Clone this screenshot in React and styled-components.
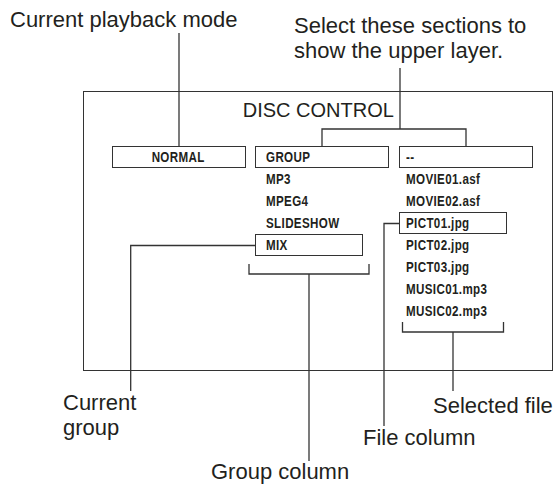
import React from 'react'
import styled, { createGlobalStyle } from 'styled-components'

const GlobalStyle = createGlobalStyle`
  html, body {
    margin: 0;
    padding: 0;
    background: #ffffff;
  }
  * {
    box-sizing: border-box;
  }
`

const INK = '#231f20'
const LINE = '#333333'

const Canvas = styled.div`
  position: relative;
  width: 554px;
  height: 484px;
  padding: 90.5px 0 0 82.5px;
  background: #ffffff;
  font-family: "Liberation Sans", Arial, Helvetica, sans-serif;
  color: ${INK};
  overflow: hidden;
`

const Callout = styled.div`
  position: absolute;
  top: ${p => p.$top}px;
  left: ${p => p.$left}px;
  font-size: 22px;
  line-height: 25px;
  white-space: nowrap;
`

const Leaders = styled.svg`
  position: absolute;
  top: 0;
  left: 0;
  pointer-events: none;
`

const Panel = styled.div`
  width: 470.5px;
  height: 280.5px;
  border: 1.5px solid ${LINE};
  padding: 8px 0 0 28px;
`

const Title = styled.div`
  font-size: 20px;
  line-height: 20px;
  text-align: center;
  margin-left: -28px;
  padding-left: 1px;
  height: 20px;
  margin-bottom: 26px;
`

const Columns = styled.div`
  display: grid;
  grid-template-columns: repeat(3, 134px);
  column-gap: 9.5px;
  align-items: start;
`

const Column = styled.div`
  display: flex;
  flex-direction: column;
`

const Item = styled.div`
  width: ${p => p.$width || 134}px;
  height: 22px;
  border: 1.5px solid ${p => (p.$boxed ? LINE : 'transparent')};
  padding: 2.5px ${p => p.$pad || 0}px 0;
  text-align: ${p => (p.$center ? 'center' : 'left')};
  font-weight: 700;
  font-size: 14.5px;
  line-height: 16px;
  white-space: nowrap;
`

// condensed bold face, the way the printed manual sets it
const Narrow = styled.span`
  display: inline-block;
  letter-spacing: 0.45px;
  transform: scaleX(0.8);
  transform-origin: ${p => (p.$center ? 'center' : 'left')} center;
`

const groups = ['GROUP', 'MP3', 'MPEG4', 'SLIDESHOW', 'MIX']
const files = ['--', 'MOVIE01.asf', 'MOVIE02.asf', 'PICT01.jpg', 'PICT02.jpg', 'PICT03.jpg', 'MUSIC01.mp3', 'MUSIC02.mp3']

const App = () => {
  return (
    <>
      <GlobalStyle />
      <Canvas>
        <Panel>
          <Title>DISC CONTROL</Title>
          <Columns>
            <Column>
              <Item $boxed $center><Narrow $center>NORMAL</Narrow></Item>
            </Column>
            <Column>
              {groups.map((g, i) => (
                <Item key={g} $pad={9.5} $boxed={i === 0 || i === 4} $width={i === 4 ? 108 : 134}>
                  <Narrow>{g}</Narrow>
                </Item>
              ))}
            </Column>
            <Column>
              {files.map((f, i) => (
                <Item key={f} $pad={6.5} $boxed={i === 0 || i === 3} $width={i === 3 ? 108 : 134}>
                  <Narrow>{f}</Narrow>
                </Item>
              ))}
            </Column>
          </Columns>
        </Panel>

        <Leaders width="554" height="484" viewBox="0 0 554 484">
          <g fill="none" stroke={LINE} strokeWidth="1.3">
            <path d="M179 33 V146" />
            <path d="M400 68 V129" />
            <path d="M322 146 V129 H466 V146" />
            <path d="M255 245.5 H130.7 V391" />
            <path d="M249 264 V274 H369 V264" />
            <path d="M309 274 V461" />
            <path d="M399 223.5 H384 V426" />
            <path d="M402.5 322 V332 H503.5 V322" />
            <path d="M453 332 V391" />
          </g>
        </Leaders>

        <Callout $top={6.6} $left={10}>Current playback mode</Callout>
        <Callout $top={13} $left={294}>Select these sections to<br />show the upper layer.</Callout>
        <Callout $top={390} $left={63}>Current<br />group</Callout>
        <Callout $top={393} $left={433}>Selected file</Callout>
        <Callout $top={425} $left={363}>File column</Callout>
        <Callout $top={459} $left={211}>Group column</Callout>
      </Canvas>
    </>
  )
}

export default App
